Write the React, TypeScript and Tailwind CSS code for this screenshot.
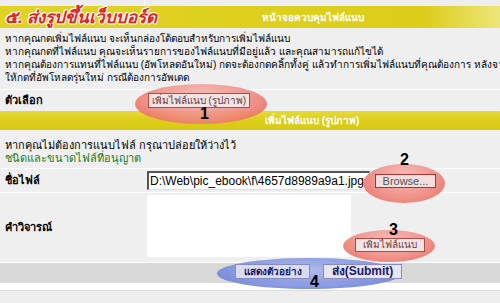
import React from 'react';

const Oval = ({ className }: { className: string }) => (
  <div className={`absolute rounded-[50%] pointer-events-none ${className}`} />
);

export default function App() {
  return (
    <div className="relative w-[500px] h-[303px] overflow-hidden bg-white text-[10px] leading-[13px] text-black font-['Tahoma','Liberation_Sans','Noto_Sans',sans-serif]">
      {/* top strip */}
      <div className="flex h-[6px] bg-[#eeeeee]">
        <div className="w-[145px] border-r border-white" />
      </div>

      {/* title bar */}
      <div className="flex h-[22px] items-center bg-[linear-gradient(90deg,#e1d322_0%,#dccd1a_85%,#ece67a_100%)]">
        <div className="w-[262px] pl-[5px] text-[17px] font-bold italic text-[#e3231c] [text-shadow:1px_0_0_#fff,-1px_0_0_#fff,0_1px_0_#fff,0_-1px_0_#fff,1px_1px_0_#fff,-1px_-1px_0_#fff]">
          ๕. ส่งรูปขึ้นเว็บบอร์ด
        </div>
        <div className="text-[10px] font-bold text-white">หน้าจอควบคุมไฟล์แนบ</div>
      </div>

      {/* intro */}
      <div className="h-[61px] overflow-hidden bg-[#efefef] px-[5px] pt-[4px]">
        <p className="whitespace-nowrap">หากคุณกดเพิ่มไฟล์แนบ จะเห็นกล่องโต้ตอบสำหรับการเพิ่มไฟล์แนบ</p>
        <p className="whitespace-nowrap">หากคุณกดที่ไฟล์แนบ คุณจะเห็นรายการของไฟล์แนบที่มีอยู่แล้ว และคุณสามารถแก้ไขได้</p>
        <p className="whitespace-nowrap">หากคุณต้องการแทนที่ไฟล์แนบ (อัพโหลดอันใหม่) กดจะต้องกดคลิ้กทั้งคู่ แล้วทำการเพิ่มไฟล์แนบที่คุณต้องการ หลังจากนั้นไม่ต้องกด</p>
        <p className="whitespace-nowrap">ให้กดที่อัพโหลดรุ่นใหม่ กรณีต้องการอัพเดต</p>
      </div>

      {/* option row */}
      <div className="flex h-[22px] border-t border-white bg-[#efefef]">
        <div className="flex w-[145px] items-center pl-[5px] text-[11px] font-bold">ตัวเลือก</div>
        <div className="flex items-start pl-[3px] pt-[3px]">
          <button className="relative z-10 h-[15px] w-[102px] border border-[#b34a4a] bg-[#f3e4e4] text-[10px] leading-[13px] text-[#6b3a3a]">
            เพิ่มไฟล์แนบ (รูปภาพ)
          </button>
        </div>
      </div>

      {/* section bar */}
      <div className="flex h-[19px] items-center bg-[linear-gradient(180deg,#e6da3a_0%,#dccd1a_50%,#d8c914_100%)]">
        <div className="w-[265px]" />
        <div className="text-[10px] font-bold text-white">เพิ่มไฟล์แนบ (รูปภาพ)</div>
      </div>

      {/* hint */}
      <div className="h-[38px] bg-[#efefef] px-[5px] pt-[9px] text-[11px]">
        <p>หากคุณไม่ต้องการแนบไฟล์ กรุณาปล่อยให้ว่างไว้</p>
        <p className="text-[#11801a]">ชนิดและขนาดไฟล์ที่อนุญาต</p>
      </div>

      {/* file row */}
      <div className="flex h-[24px] border-t border-white bg-[#efefef]">
        <div className="flex w-[145px] items-center pl-[5px] text-[11px] font-bold">ชื่อไฟล์</div>
        <div className="flex items-center gap-[5px] pl-[2px]">
          <div className="flex h-[19px] w-[223px] items-center overflow-hidden whitespace-nowrap border-l-2 border-t-2 border-[#555] border-b border-r border-b-[#ddd] border-r-[#ddd] bg-white pl-[1px] text-[12px] font-['Liberation_Sans',sans-serif]">
            D:\Web\pic_ebook\f\4657d8989a9a1.jpg
          </div>
          <button className="relative z-10 h-[14px] w-[61px] border border-[#a33] bg-[#f1dede] text-[11px] leading-[12px] text-[#555] font-['Liberation_Sans',sans-serif]">
            Browse...
          </button>
        </div>
      </div>

      {/* comment row */}
      <div className="flex h-[70px] border-t border-white bg-[#efefef]">
        <div className="flex w-[145px] items-center pl-[5px] text-[11px] font-bold">คำวิจารณ์</div>
        <div className="flex items-start pl-[2px] pt-[2px]">
          <div className="h-[62px] w-[204px] bg-white" />
          <div className="flex h-[62px] items-end pl-[4px] pb-[5px]">
            <button className="relative z-10 h-[14px] w-[70px] border border-[#b34a4a] bg-[#f3e4e4] text-[10px] leading-[12px] text-[#6b3a3a]">
              เพิ่มไฟล์แนบ
            </button>
          </div>
        </div>
      </div>

      {/* buttons bar */}
      <div className="flex h-[21px] items-start gap-[13px] border-t border-white bg-[#d9d9d9] pl-[235px]">
        <button className="relative z-10 mt-[1px] h-[15px] w-[75px] border border-[#8a8ac0] bg-[#d8dcf0] text-[10px] font-bold leading-[13px] text-[#18186a]">
          แสดงตัวอย่าง
        </button>
        <button className="relative z-10 mt-[1px] h-[15px] w-[79px] border border-[#8a8ac0] bg-[#e4e6f4] text-[12px] font-bold leading-[13px] text-[#18186a] font-['Liberation_Sans',sans-serif]">
          ส่ง(Submit)
        </button>
      </div>

      <div className="h-[7px] bg-white" />
      <div className="h-[13px] border-t border-[#ddd] bg-[#eeeeee]" />

      {/* callout ovals */}
      <Oval className="left-[135px] top-[84px] h-[40px] w-[132px] bg-[radial-gradient(ellipse_at_50%_30%,#f6b6b0_0%,#f08a82_55%,#e8604a_100%)] opacity-90" />
      <Oval className="left-[363px] top-[164px] h-[39px] w-[82px] bg-[radial-gradient(ellipse_at_50%_30%,#f6b6b0_0%,#f08a82_55%,#e8604a_100%)] opacity-90" />
      <Oval className="left-[343px] top-[230px] h-[32px] w-[92px] bg-[radial-gradient(ellipse_at_50%_30%,#f6b6b0_0%,#f08a82_55%,#e8604a_100%)] opacity-90" />
      <Oval className="left-[217px] top-[258px] h-[31px] w-[184px] bg-[radial-gradient(ellipse_at_50%_40%,#aab8ee_0%,#7f93e0_55%,#5d72d0_100%)] opacity-90" />

      <span className="absolute left-[200px] top-[108px] z-20 text-[16px] font-bold leading-[12px] font-['Liberation_Sans',sans-serif]">1</span>
      <span className="absolute left-[400px] top-[154px] z-20 text-[16px] font-bold leading-[12px] font-['Liberation_Sans',sans-serif]">2</span>
      <span className="absolute left-[389px] top-[224px] z-20 text-[16px] font-bold leading-[12px] font-['Liberation_Sans',sans-serif]">3</span>
      <span className="absolute left-[310px] top-[276px] z-20 text-[16px] font-bold leading-[12px] font-['Liberation_Sans',sans-serif]">4</span>
    </div>
  );
}
